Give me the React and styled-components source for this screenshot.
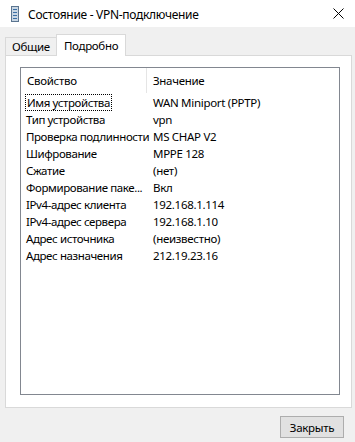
import styled, { createGlobalStyle } from "styled-components";

const Global = createGlobalStyle`
    html, body {
        margin: 0;
        padding: 0;
        background: #f0f0f0;
    }
    body {
        font-family: "Noto Sans", "Open Sans", sans-serif;
        font-size: 11.5px;
        letter-spacing: -0.3px;
        color: #000;
    }
`;

const Window = styled.div`
    width: 355px;
    height: 442px;
    display: flex;
    flex-direction: column;
    background: #f0f0f0;
    overflow: hidden;
`;

const TitleBar = styled.div`
    height: 27px;
    background: #fff;
    display: flex;
    align-items: center;
    padding: 0 10px 0 11px;
    gap: 9px;
    font-size: 12px;
`;

const Title = styled.div`
    flex: 1;
    padding-top: 1px;
`;

const Close = styled.div`
    width: 14px;
    display: flex;
    justify-content: center;
`;

const Body = styled.div`
    flex: 1;
    display: flex;
    flex-direction: column;
    padding: 6px 3px 0 5px;
`;

const Tabs = styled.div`
    display: flex;
    align-items: flex-end;
    height: 22px;
`;

const Tab = styled.div`
    height: ${(p) => (p.$active ? "22px" : "18px")};
    padding: 0 ${(p) => (p.$active ? "7px" : "6px")};
    background: ${(p) => (p.$active ? "#fff" : "#f0f0f0")};
    border: 1px solid #d9d9d9;
    border-bottom: none;
    ${(p) => (p.$active ? "margin-bottom: -1px; position: relative; z-index: 1;" : "border-right: none;")}
    display: flex;
    align-items: center;
    box-sizing: border-box;
`;

const Panel = styled.div`
    height: 353px;
    background: #fff;
    border: 1px solid #d9d9d9;
    box-sizing: border-box;
    padding: 11px 11px 12px 14px;
    display: flex;
`;

const ListBox = styled.div`
    flex: 1;
    border: 1px solid #828790;
    background: #fff;
    display: flex;
    flex-direction: column;
`;

const Header = styled.div`
    display: grid;
    grid-template-columns: 126px 1fr;
    height: 25px;
    align-items: center;
    margin-bottom: 1px;
`;

const HeadCell = styled.div`
    padding-left: 6px;
    height: 100%;
    display: flex;
    align-items: center;
    ${(p) => (p.$first ? "border-right: 1px solid #e5e5e5;" : "")}
`;

const Row = styled.div`
    display: grid;
    grid-template-columns: 126px 1fr;
    height: 17px;
    align-items: center;
`;

const Cell = styled.div`
    padding-left: ${(p) => (p.$value ? "6px" : "5px")};
    white-space: nowrap;
    letter-spacing: ${(p) => (p.$value ? "-0.3px" : "-0.4px")};
`;

const Focus = styled.span`
    outline: 1px dotted #000;
    outline-offset: 0px;
    padding: 0 1px;
`;

const Footer = styled.div`
    display: flex;
    justify-content: flex-end;
    padding: 8px 8px 0 0;
`;

const Button = styled.button`
    width: 64px;
    height: 22px;
    background: #e1e1e1;
    border: 1px solid #adadad;
    font-family: inherit;
    font-size: 11.5px;
    letter-spacing: -0.3px;
    padding: 0;
    color: #000;
`;

const rows = [
    ["Имя устройства", "WAN Miniport (PPTP)"],
    ["Тип устройства", "vpn"],
    ["Проверка подлинности", "MS CHAP V2"],
    ["Шифрование", "MPPE 128"],
    ["Сжатие", "(нет)"],
    ["Формирование паке...", "Вкл"],
    ["IPv4-адрес клиента", "192.168.1.114"],
    ["IPv4-адрес сервера", "192.168.1.10"],
    ["Адрес источника", "(неизвестно)"],
    ["Адрес назначения", "212.19.23.16"],
];

const NetIcon = () => (
    <svg width="8" height="16" viewBox="0 0 8 16">
        <rect x="0.5" y="0.5" width="7" height="15" fill="#c9d6e3" stroke="#5b7590" />
        <rect x="2" y="3" width="4" height="1" fill="#3a6ea5" />
        <rect x="2" y="6" width="4" height="1" fill="#3a6ea5" />
        <rect x="2" y="9" width="4" height="1" fill="#3a6ea5" />
        <rect x="2" y="12" width="4" height="1" fill="#3a6ea5" />
    </svg>
);

const App = () => {
    return (
        <>
            <Global />
            <Window>
                <TitleBar>
                    <NetIcon />
                    <Title>Состояние - VPN-подключение</Title>
                    <Close>
                        <svg width="11" height="11" viewBox="0 0 11 11">
                            <path d="M0.5 0.5 L10.5 10.5 M10.5 0.5 L0.5 10.5" stroke="#000" strokeWidth="1" />
                        </svg>
                    </Close>
                </TitleBar>
                <Body>
                    <Tabs>
                        <Tab>Общие</Tab>
                        <Tab $active>Подробно</Tab>
                    </Tabs>
                    <Panel>
                        <ListBox>
                            <Header>
                                <HeadCell $first>Свойство</HeadCell>
                                <HeadCell>Значение</HeadCell>
                            </Header>
                            {rows.map(([k, v], i) => (
                                <Row key={k}>
                                    <Cell>{i === 0 ? <Focus>{k}</Focus> : k}</Cell>
                                    <Cell $value>{v}</Cell>
                                </Row>
                            ))}
                        </ListBox>
                    </Panel>
                    <Footer>
                        <Button>Закрыть</Button>
                    </Footer>
                </Body>
            </Window>
        </>
    );
};

export default App;
